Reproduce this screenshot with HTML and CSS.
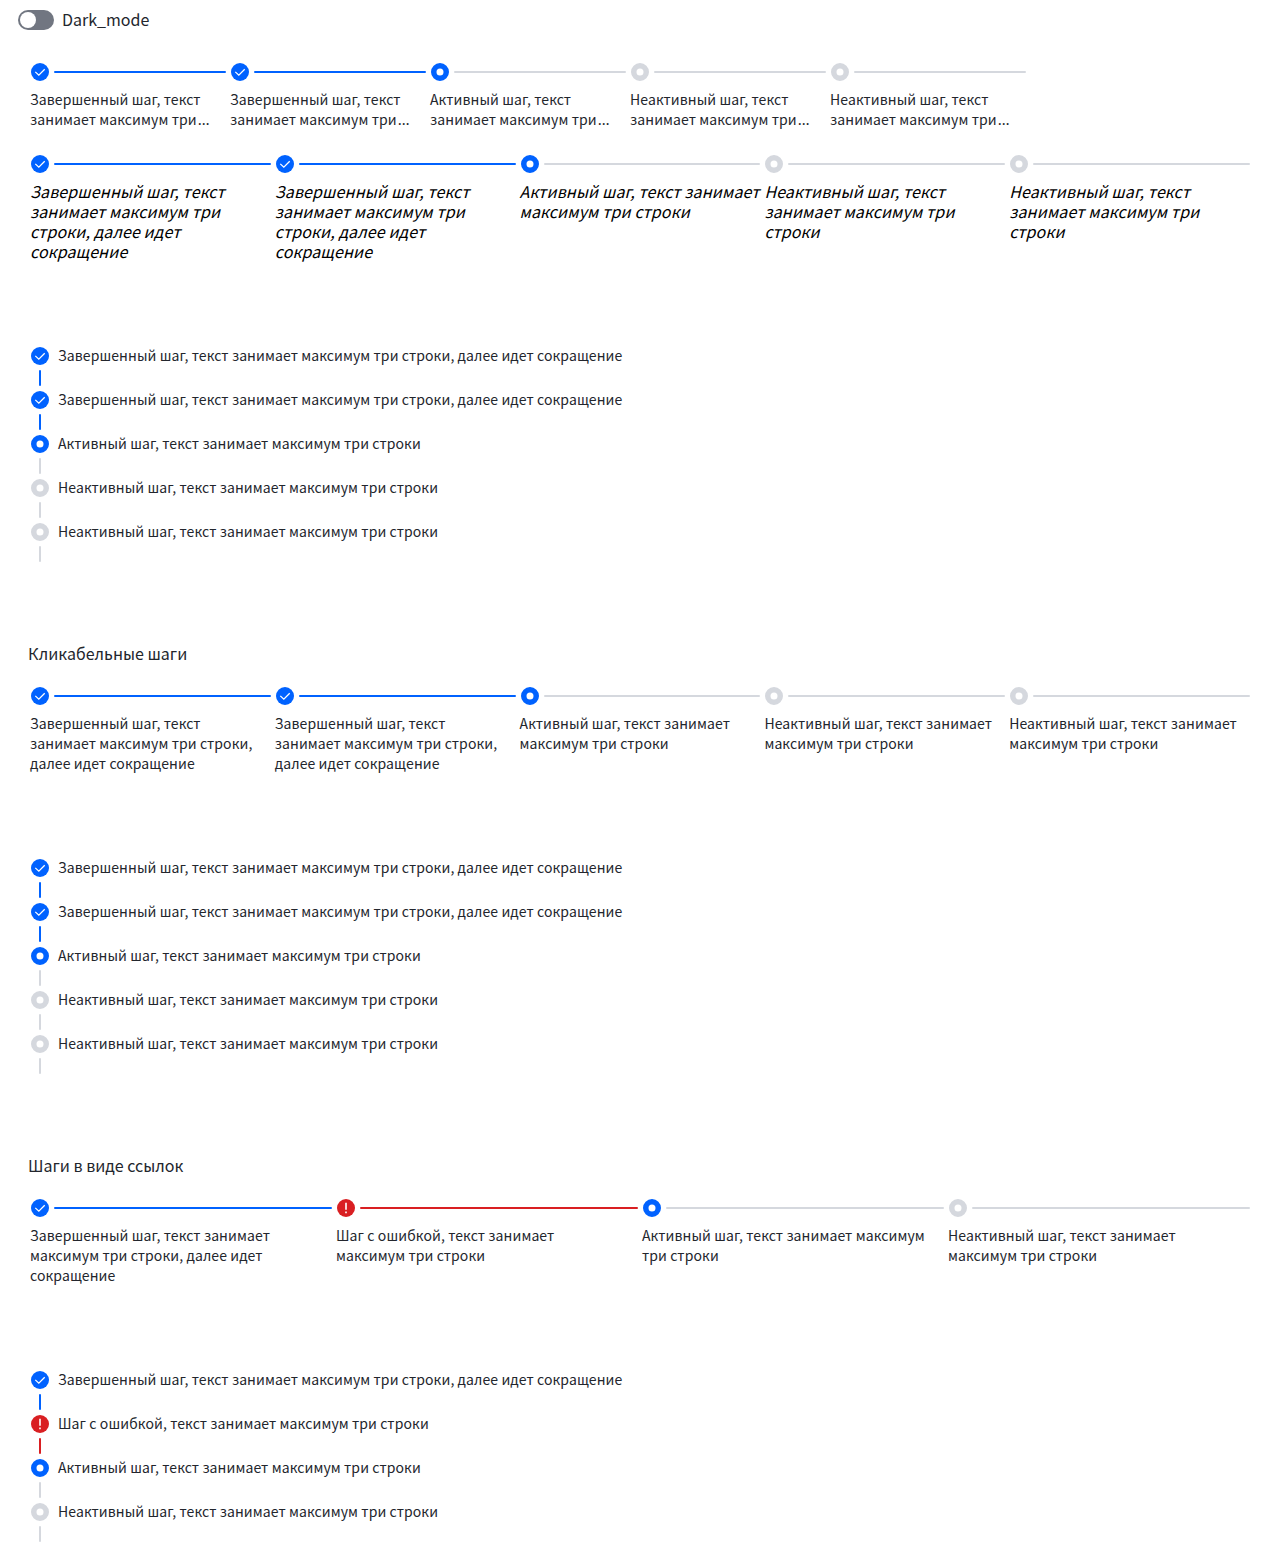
FILE: index.html
```
<!DOCTYPE html>
<html lang="ru">
<head>
<meta charset="utf-8">
<title>Steps</title>
<link rel="stylesheet" href="styles.css">
</head>
<body>
<svg width="0" height="0" class="sprite">
  <symbol id="done" viewBox="0 0 20 20"><circle cx="10" cy="10" r="9" fill="currentColor"/><path d="M5.3 9.9 8.8 13.2 14.7 7.2" fill="none" stroke="#fff" stroke-width="1.3"/></symbol>
  <symbol id="dot" viewBox="0 0 20 20"><circle cx="10" cy="10" r="6.25" fill="none" stroke="currentColor" stroke-width="5.5"/></symbol>
  <symbol id="error" viewBox="0 0 20 20"><circle cx="10" cy="10" r="9" fill="currentColor"/><path d="M9.2 4.7h1.6v7.1H9.2zM9.2 13.6h1.6v1.6H9.2z" fill="#fff"/></symbol>
</svg>
<label class="switch"><span class="track"></span><span class="label">Dark_mode</span></label>
<main id="page"></main>
<script src="steps.js"></script>
</body>
</html>
```
FILE: styles.css
```
body {
  margin: 0;
  background: #fff;
  color: #23262d;
  font-family: "Noto Sans CJK SC", "Noto Sans", sans-serif;
  font-size: 16px;
  line-height: 20px;
}
.sprite { display: block; }
.switch {
  display: flex;
  align-items: center;
  gap: 8px;
  height: 20px;
  padding: 10px 18px;
}
.label { margin-top: -2px; }
.track {
  box-sizing: border-box;
  width: 36px;
  height: 20px;
  padding: 2px;
  border-radius: 10px;
  background: #717681;
}
.track::before {
  content: "";
  display: block;
  width: 16px;
  height: 16px;
  border-radius: 50%;
  background: #fff;
}
main { padding: 22px 30px 0; }
.heading {
  margin: 0 0 23px -2px;
  font-size: 16px;
  font-weight: 400;
  line-height: 20px;
}
.steps {
  display: grid;
  grid-auto-flow: column;
  grid-auto-columns: minmax(0, 1fr);
  gap: 4px;
  margin: 0 0 84px;
  padding: 0;
  list-style: none;
  font-size: 14px;
  letter-spacing: 0.1px;
}
.steps.fixed { grid-auto-columns: 196px; margin-bottom: 24px; }
.done, .active { color: #0062ff; }
.idle { color: #d5d8de; }
.error { color: #d91f22; }
.rail { display: flex; align-items: center; gap: 4px; }
.icon { display: block; flex: none; width: 20px; height: 20px; }
.line { flex: 1; height: 2px; border-radius: 1px; background: currentColor; }
.active .line { background: #d5d8de; }
.text { margin: 7px 0 1px; padding-right: 12px; color: #23262d; }
.more { margin-left: 1px; font-family: "Noto Sans", sans-serif; font-size: 15px; line-height: 1; }
.italic .text {
  padding-right: 0;
  color: #000;
  font-size: 16px;
  font-style: italic;
}
.steps.vertical { grid-auto-flow: row; margin-bottom: 81px; }
.vertical .step { display: flex; gap: 8px; }
.vertical .rail { flex-direction: column; }
.vertical .line { flex: none; width: 2px; height: 16px; }
.vertical .text { margin: -1px 0 0; padding: 0; }
```
FILE: steps.js
```
const texts = {
  done: "Завершенный шаг, текст занимает максимум три строки, далее идет сокращение",
  active: "Активный шаг, текст занимает максимум три строки",
  idle: "Неактивный шаг, текст занимает максимум три строки",
  error: "Шаг с ошибкой, текст занимает максимум три строки"
};
const five = ["done", "done", "active", "idle", "idle"];
const four = ["done", "error", "active", "idle"];
const icons = { done: "done", active: "dot", idle: "dot", error: "error" };

const shorten = t => t.replace(/ строки.*/, '<span class="more">…</span>');
const steps = (states, kind = "") => `<ol class="steps ${kind}">${states.map(s => `
  <li class="step ${s}">
    <div class="rail"><svg class="icon"><use href="#${icons[s]}"/></svg><span class="line"></span></div>
    <div class="text">${kind === "fixed" ? shorten(texts[s]) : texts[s]}</div>
  </li>`).join("")}</ol>`;
const heading = t => `<h2 class="heading">${t}</h2>`;

document.getElementById("page").innerHTML =
  steps(five, "fixed") + steps(five, "italic") + steps(five, "vertical") +
  heading("Кликабельные шаги") + steps(five) + steps(five, "vertical") +
  heading("Шаги в виде ссылок") + steps(four) + steps(four, "vertical");
```
